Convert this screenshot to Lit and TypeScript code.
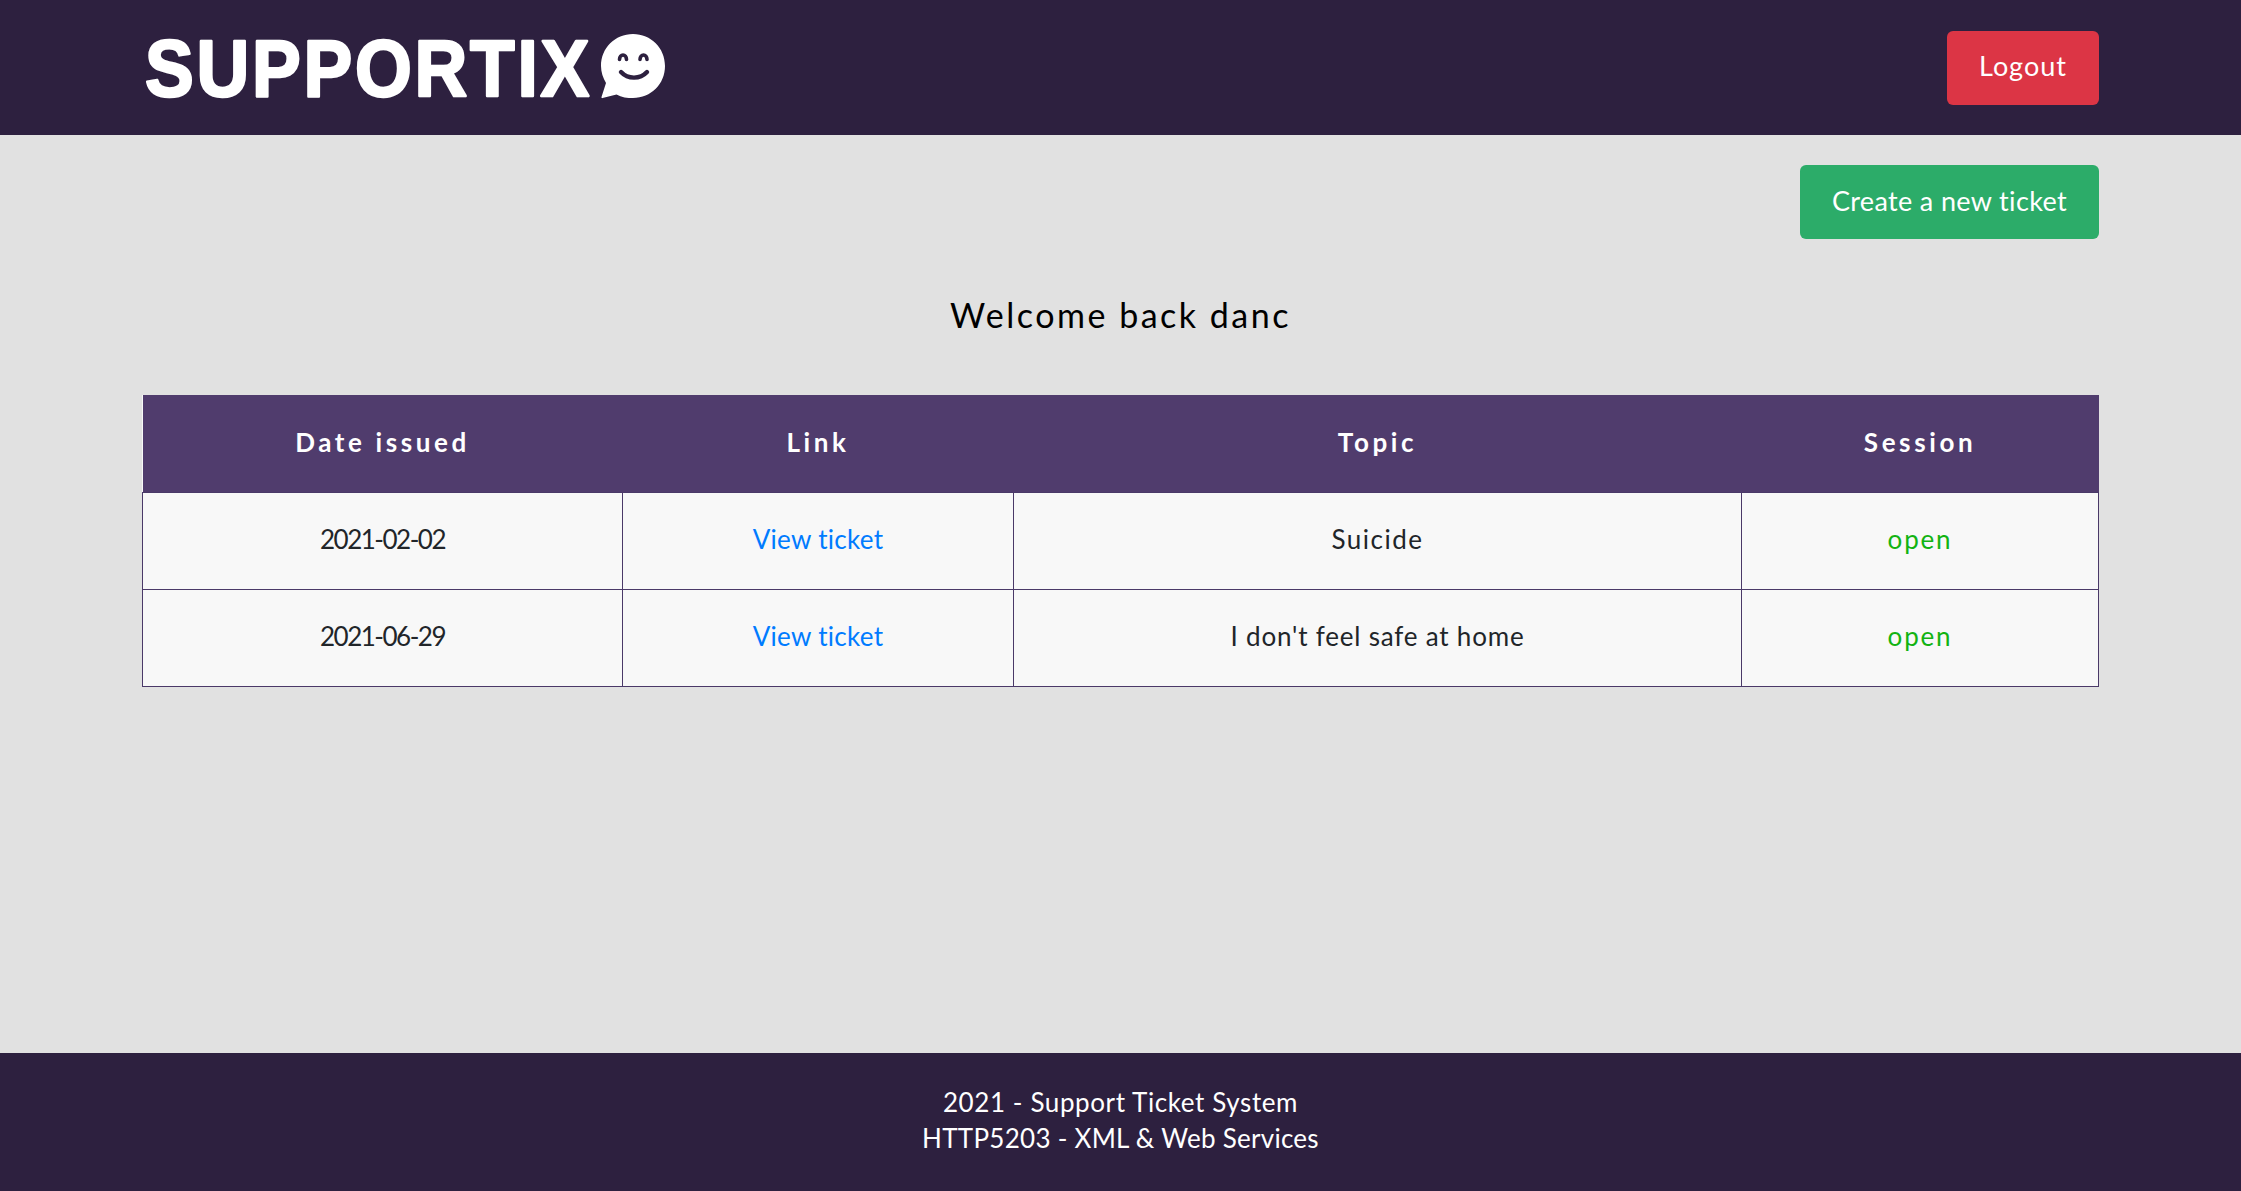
import { LitElement, html, css, svg } from 'lit';
import { customElement } from 'lit/decorators.js';

const tickets = [
  { date: '2021-02-02', topic: 'Suicide', topicClass: 'short' },
  { date: '2021-06-29', topic: "I don't feel safe at home", topicClass: 'long' },
];

const logo = svg`
  <text class="word" x="145" y="96" textLength="447" lengthAdjust="spacingAndGlyphs">SUPPORTIX</text>
  <path fill="#fff" d="M633 34C615 34 601 48 601 66c0 6 2 12 5 17l-4.500 14c-.2.800.300 1.300 1 1.100l14-3.600c5 3 11 3.500 16.500 3.500 18 0 32-14 32-32s-14-32-32-32z"/>
  <g fill="none" stroke="#2d203f" stroke-linecap="round">
    <path stroke-width="3.600" d="M619.500 59.500c0-6 7-6 7 0M640 59.500c0-6 7-6 7 0"/>
    <path stroke-width="4.400" d="M621 72c7 7.500 19 7.500 26 0"/>
  </g>
`;

@customElement('app-root')
export class AppRoot extends LitElement {
  static override styles = css`
    :host {
      display: flex;
      flex-direction: column;
      min-height: 1191px;
      background: #e1e1e1;
      font-family: 'Lato', 'Open Sans', sans-serif;
      color: #212529;
    }

    .topbar {
      height: 135px;
      background: #2d203f;
      padding: 0 142px;
      display: flex;
      align-items: center;
      justify-content: space-between;
      box-sizing: border-box;
    }

    .logo {
      width: 700px;
      height: 135px;
      margin-left: -142px;
      display: block;
    }

    .word {
      font-family: 'Liberation Sans', sans-serif;
      font-weight: 700;
      font-size: 79px;
      letter-spacing: 3px;
      font-kerning: none;
      fill: #fff;
      stroke: #fff;
      stroke-width: 2.5px;
      stroke-linejoin: round;
    }

    .btn {
      height: 74px;
      padding: 0 32px 4px;
      display: flex;
      align-items: center;
      border-radius: 6px;
      color: #fff;
      font-size: 27px;
      box-sizing: border-box;
    }

    .logout {
      background: #dc3545;
      letter-spacing: 1px;
    }

    .create {
      background: #2cac69;
      letter-spacing: 0.35px;
    }

    main {
      flex: 1;
      padding: 30px 142px 0;
    }

    .actions {
      display: flex;
      justify-content: flex-end;
    }

    h1 {
      margin: 0;
      padding-top: 56px;
      height: 156px;
      box-sizing: border-box;
      text-align: center;
      font-size: 34px;
      line-height: 40px;
      font-weight: 400;
      letter-spacing: 2.5px;
      color: #000;
    }

    table {
      width: 100%;
      table-layout: fixed;
      border-collapse: collapse;
      background: #f8f8f8;
    }

    th {
      height: 93px;
      padding: 0 0 4px;
      background: #503c6d;
      color: #fff;
      font-size: 26px;
      font-weight: 700;
      letter-spacing: 3.6px;
    }

    td {
      height: 92px;
      padding: 0 0 4px;
      border: 1px solid #4a3968;
      text-align: center;
      font-size: 26px;
    }

    .c1 { width: 480px; }
    .c2 { width: 391px; }
    .c3 { width: 728px; }

    .date { letter-spacing: -1.5px; }
    .short { letter-spacing: 1.5px; }
    .long { letter-spacing: 0.8px; }

    .link {
      color: #007bff;
      text-decoration: none;
      letter-spacing: 0.3px;
    }

    .open {
      color: #12b312;
      letter-spacing: 1.8px;
    }

    footer {
      height: 138px;
      background: #2d203f;
      color: #fff;
      text-align: center;
      font-size: 26px;
      line-height: 36px;
      padding-top: 31px;
      box-sizing: border-box;
    }

    .line {
      display: block;
      letter-spacing: 0.6px;
    }

    .line.tight {
      letter-spacing: 0.27px;
    }
  `;

  override render() {
    return html`
      <header class="topbar">
        <svg class="logo" viewBox="0 0 700 135" role="img" aria-label="Supportix">${logo}</svg>
        <a class="btn logout">Logout</a>
      </header>
      <main>
        <div class="actions"><a class="btn create">Create a new ticket</a></div>
        <h1>Welcome back danc</h1>
        <table>
          <thead>
            <tr>
              <th class="c1">Date issued</th>
              <th class="c2">Link</th>
              <th class="c3">Topic</th>
              <th>Session</th>
            </tr>
          </thead>
          <tbody>
            ${tickets.map(
              (t) => html`
                <tr>
                  <td class="date">${t.date}</td>
                  <td><a class="link">View ticket</a></td>
                  <td class=${t.topicClass}>${t.topic}</td>
                  <td class="open">open</td>
                </tr>
              `
            )}
          </tbody>
        </table>
      </main>
      <footer>
        <span class="line">2021 - Support Ticket System</span>
        <span class="line tight">HTTP5203 - XML &amp; Web Services</span>
      </footer>
    `;
  }
}
